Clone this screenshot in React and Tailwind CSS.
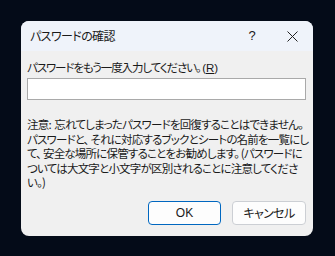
export default function App() {
  const jp = "font-['Meiryo_UI','Noto_Sans_CJK_JP',sans-serif] [font-feature-settings:'palt']";
  return (
    <div className="flex h-[256px] w-[335px] items-start bg-[#040b18] pl-[21px] pt-[21px]">
      <div className={`flex h-[215px] w-[292px] flex-col overflow-hidden rounded-[8px] bg-[#f0f0f0] text-[12px] text-[#1a1a1a] ${jp}`}>
        <div className="flex h-[30px] shrink-0 items-center bg-[#eff3fa] pl-[9px]">
          <span className="flex-1 tracking-[-0.6px]">パスワードの確認</span>
          <span className="w-[20px] text-center font-['Segoe_UI','Liberation_Sans',sans-serif] text-[13px]">?</span>
          <span className="ml-[24px] mr-[15px] flex w-[12px] justify-center">
            <svg width="11" height="11" viewBox="0 0 11 11" stroke="#222" strokeWidth="1" fill="none">
              <path d="M0.5 0.5L10.5 10.5M10.5 0.5L0.5 10.5" />
            </svg>
          </span>
        </div>
        <div className="flex flex-col px-[6px] pt-[8px]">
          <div className="h-[17px] text-[11.5px] leading-[17px] tracking-[-1.1px]">
            パスワードをもう一度入力してください。&nbsp;
            <span className="font-['Segoe_UI','Liberation_Sans',sans-serif] tracking-normal">
              (<span className="underline">R</span>)
            </span>
          </div>
          <div className="mt-[2px] h-[22px] w-[279px] border border-[#a9a9a9] bg-white" />
          <div className="mt-[17px] whitespace-nowrap text-[11.5px] leading-[14.6px] tracking-[-0.8px]">
            注意:&nbsp;&nbsp;忘れてしまったパスワードを回復することはできません。<br />
            パスワードと、&nbsp;それに対応するブックとシートの名前を一覧にし<br />
            て、&nbsp;安全な場所に保管することをお勧めします。&nbsp;(パスワードに<br />
            ついては大文字と小文字が区別されることに注意してくださ<br />
            い。)
          </div>
          <div className="mt-[11px] flex justify-end gap-[11px] pr-[1px]">
            <button className="h-[24px] w-[73px] rounded-[4px] border border-[#0067c0] bg-[#fdfdfd] text-[12px] font-['Segoe_UI','Liberation_Sans',sans-serif]">
              OK
            </button>
            <button className="h-[24px] w-[74px] rounded-[4px] border border-[#cccfd4] bg-[#fdfdfd] text-[12px] tracking-[-0.6px]">
              キャンセル
            </button>
          </div>
        </div>
      </div>
    </div>
  );
}
